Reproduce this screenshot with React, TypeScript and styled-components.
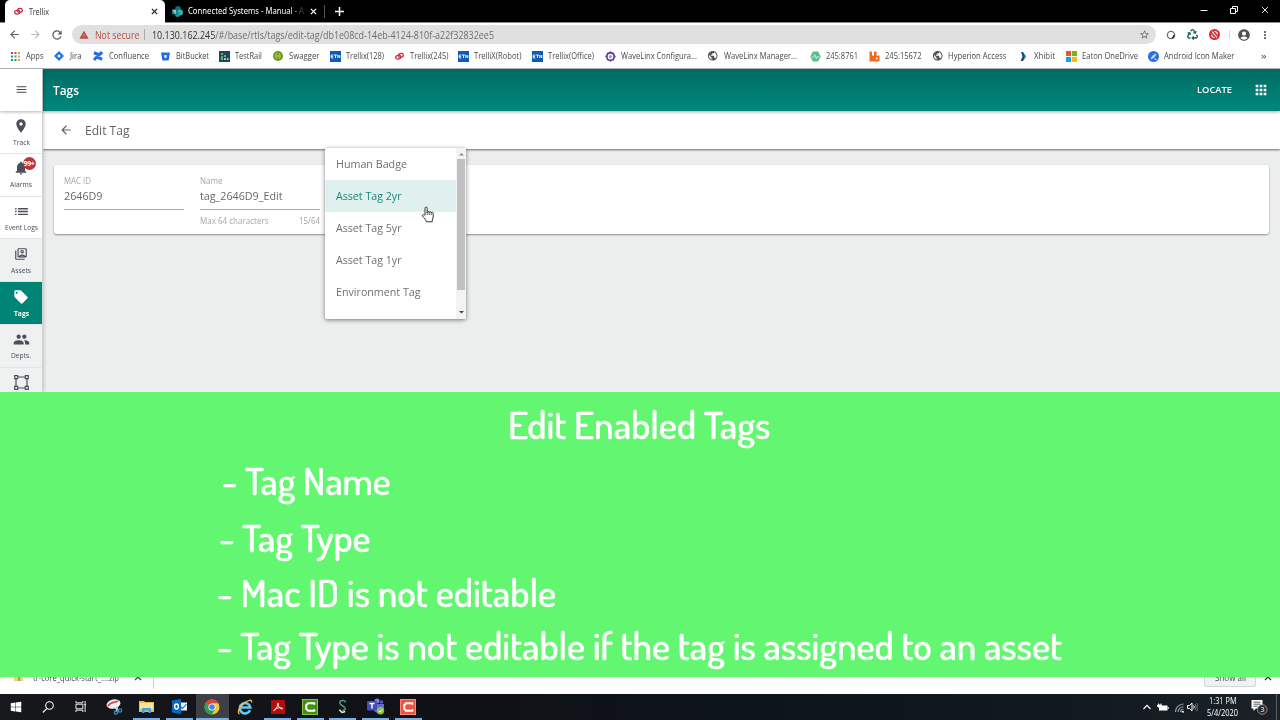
import React, { useLayoutEffect, useRef, useState } from "react";
import styled, { createGlobalStyle, css } from "styled-components";
import {
  MdMenu, MdPlace, MdNotifications, MdList, MdLocalOffer, MdPeople, MdArrowBack, MdArrowForward,
  MdApps, MdRefresh, MdWarning, MdStarBorder, MdAccountCircle, MdMoreVert, MdOutlineSwitchAccount, MdPublic,
} from "react-icons/md";
import { FaRecycle, FaConfluence, FaBitbucket, FaWindows } from "react-icons/fa";

const Global = createGlobalStyle`
  html, body { margin: 0; padding: 0; overflow: hidden; }
  * { box-sizing: border-box; }
  body { font-family: "Open Sans", "Noto Sans", sans-serif; }
  svg { display: block; flex: none; }
`;

/* ---------- text scaled to a known measure ---------- */
const Measure = styled.span<{ $w: number }>`
  display: block;
  flex: none;
  width: ${(p) => p.$w}px;
  white-space: nowrap;
`;
const MeasureInner = styled.span`
  display: inline-block;
  transform-origin: 0 50%;
`;
function Fit({ w, children }: { w: number; children: React.ReactNode }) {
  const ref = useRef<HTMLSpanElement>(null);
  const [scale, setScale] = useState(1);
  useLayoutEffect(() => {
    if (ref.current) setScale(w / ref.current.getBoundingClientRect().width);
  }, [w]);
  return (
    <Measure $w={w}>
      <MeasureInner ref={ref} style={{ transform: `scaleX(${scale})` }}>{children}</MeasureInner>
    </Measure>
  );
}

const Screen = styled.div`
  width: 1280px;
  height: 720px;
  display: flex;
  flex-direction: column;
  overflow: hidden;
  background: #fff;
`;

/* ---------- browser chrome ---------- */
const TabStrip = styled.div`
  height: 23px;
  flex: none;
  display: flex;
  align-items: stretch;
  background: #000;
  border-bottom: 1px solid #8b8b8b;
  padding-left: 5px;
  color: #fff;
  font: 9.7px/22px "Noto Sans", sans-serif;
`;
const Tab = styled.div<{ $active?: boolean; $w: number }>`
  width: ${(p) => p.$w}px;
  display: flex;
  align-items: center;
  padding: 0 7px 0 ${(p) => (p.$active ? 9 : 7)}px;
  gap: ${(p) => (p.$active ? 6 : 5)}px;
  ${(p) => p.$active && css`
    height: 23px;
    background: #fff;
    color: #3c4043;
    border-radius: 5px 5px 0 0;
  `}
`;
const TabTitle = styled.div<{ $fade?: boolean }>`
  flex: 1;
  ${(p) => p.$fade && css`mask-image: linear-gradient(90deg, #000 88%, rgba(0, 0, 0, 0.25) 97%);`}
`;
const TabDivider = styled.div`
  width: 1px;
  height: 13px;
  margin: 5px 10px 0 0;
  background: #555;
`;
const WindowButtons = styled.div`
  margin-left: auto;
  display: flex;
  gap: 22.5px;
  align-items: center;
  padding-right: 11.5px;
  height: 19px;
`;

const Toolbar = styled.div`
  height: 23px;
  flex: none;
  display: flex;
  align-items: center;
  padding: 0 8px 0 8px;
  color: #5a5d61;
`;
const NavButtons = styled.div`
  display: flex;
  gap: 8px;
  width: 64px;
`;
const AddressBar = styled.div`
  height: 19px;
  width: 1084px;
  border-radius: 10px;
  background: #e0e0e0;
  display: flex;
  align-items: center;
  padding: 0 6px 0 7px;
  font: 10.4px/18px "Open Sans", sans-serif;
  color: #6b6e72;
  b { font-weight: 400; color: #303236; }
`;
const Insecure = styled.div`
  display: flex;
  align-items: center;
  gap: 6px;
  color: #bd4a42;
  padding-right: 5px;
  margin-right: 7px;
  background: linear-gradient(#aaa, #aaa) right center / 1px 11px no-repeat;
`;
const Push = styled.div`margin-left: auto;`;
const Extensions = styled.div`
  flex: 1;
  display: flex;
  align-items: center;
  gap: 11px;
  padding-left: 10px;
  color: #50555a;
`;
const ExtDivider = styled.div`width: 1px; height: 9px; margin: 0 -4px 0 -2px; background: #d5d8dc;`;
const Kebab = styled.div`margin-left: -3px;`;

const Bookmarks = styled.div`
  height: 23px;
  flex: none;
  display: flex;
  align-items: center;
  padding: 0 0 2px 10px;
  border-bottom: 1px solid #a9b1b0;
  color: #46494d;
  font: 9.2px/18px "Open Sans", sans-serif;
`;
const Bookmark = styled.div<{ $slot: number }>`
  width: ${(p) => p.$slot}px;
  flex: none;
  display: flex;
  align-items: center;
  gap: 5px;
`;
const BookmarkIcon = styled.div`
  width: 11px;
  height: 11px;
  display: flex;
  align-items: center;
  justify-content: center;
`;

const TrellixLogo = ({ s = 10 }: { s?: number }) => (
  <svg width={s} height={s} viewBox="0 0 20 20" fill="none" strokeWidth="2.900">
    <rect x="1.500" y="7.500" width="11" height="8" rx="4" stroke="#b8304e" transform="rotate(-12 7 11.500)" />
    <rect x="7.500" y="3.500" width="11" height="8" rx="4" stroke="#e0283c" transform="rotate(-12 13 7.500)" />
  </svg>
);
const EatonLogo = () => (
  <svg width="11" height="11" viewBox="0 0 22 22">
    <rect width="22" height="22" fill="#0a5cb5" />
    <path d="M7 8H2.500v6H7M2.500 11H6M8 8h6M11 8v6M15.500 14V8l4 6V8" stroke="#fff" strokeWidth="1.700" fill="none" />
  </svg>
);
const bookmarkIcons: Record<string, React.ReactNode> = {
  apps: (
    <svg width="9" height="9" viewBox="0 0 9 9">
      {["#db4437", "#db4437", "#e8a33d", "#0f9d58", "#4285f4", "#e8a33d", "#0f9d58", "#0f9d58", "#e8a33d"].map((c, i) => (
        <rect key={i} x={(i % 3) * 3.5} y={Math.floor(i / 3) * 3.5} width="2" height="2" fill={c} />
      ))}
    </svg>
  ),
  jira: (
    <svg width="10" height="10" viewBox="0 0 20 20">
      <path d="M10 0l10 10-10 10L0 10z" fill="#2273e6" /><path d="M10 6.500l3.500 3.500-3.500 3.500L6.500 10z" fill="#fff" />
    </svg>
  ),
  confluence: <FaConfluence size={10} color="#1f6fe0" />,
  bitbucket: <FaBitbucket size={9} color="#1f6fe0" />,
  testrail: (
    <svg width="11" height="11" viewBox="0 0 11 11">
      <rect width="11" height="11" fill="#24455f" />
      <path d="M2 2h2v2H2zM2 5h2v4H2zM5 4h2v2H5z" fill="#61b26b" /><path d="M5 7h2v2H5zM8 7h1.500v2H8z" fill="#9fd0a0" />
    </svg>
  ),
  swagger: (
    <svg width="10" height="10" viewBox="0 0 22 22">
      <circle cx="11" cy="11" r="11" fill="#6f9a16" />
      <path d="M9 5.500C6 5.500 8 10 5.500 11c2.500 1 .5 5.500 3.500 5.500M13 5.500c3 0 1 4.500 3.500 5.500-2.500 1-.5 5.500-3.500 5.500M9 11h4.500" stroke="#d9eda0" strokeWidth="1.800" fill="none" />
    </svg>
  ),
  eaton: <EatonLogo />,
  trellix: <TrellixLogo s={9} />,
  wave: (
    <svg width="11" height="11" viewBox="0 0 22 22">
      <path d="M11 .5l3 2 4 .8 1 3.700 2.500 4-2.500 4-1 3.700-4 .8-3 2-3-2-4-.8-1-3.700L.5 11 3 7l1-3.700 4-.8z" fill="#5937a8" />
      <circle cx="11" cy="11" r="4.500" fill="#a58bdc" stroke="#fff" strokeWidth="2.500" />
    </svg>
  ),
  globe: <MdPublic size={11.5} color="#505357" />,
  pulse: (
    <svg width="11" height="11" viewBox="0 0 22 22">
      <path d="M6 1h10l5.500 10L16 21H6L.5 11z" fill="#57bb8a" />
      <path d="M3 12h4l2.500-5 3 9 2.500-6 1.500 2H19" stroke="#e5f7ee" strokeWidth="1.600" fill="none" />
    </svg>
  ),
  rabbit: (
    <svg width="11" height="11" viewBox="0 0 22 22">
      <path d="M1 1h5v8h4V1h5v8h6v12H1z" fill="#f3691d" /><rect x="14" y="13" width="3" height="3.500" fill="#fff" />
    </svg>
  ),
  xhibit: (
    <svg width="11" height="11" viewBox="0 0 22 22">
      <path d="M6 2h4l6 9-6 9H5l4-9z" fill="#1b4b77" /><path d="M12 5l4 6-5 7 2-7z" fill="#3192cf" />
    </svg>
  ),
  microsoft: (
    <svg width="11" height="11" viewBox="0 0 11 11">
      <path d="M0 0h5v5H0z" fill="#ef5327" /><path d="M6 0h5v5H6z" fill="#7cb613" />
      <path d="M0 6h5v5H0z" fill="#12a1e8" /><path d="M6 6h5v5H6z" fill="#fdb813" />
    </svg>
  ),
  maker: (
    <svg width="11" height="11" viewBox="0 0 22 22">
      <circle cx="11" cy="11" r="11" fill="#2a6fdb" /><path d="M5 17l3-7 7-5 2 2-5 7z" fill="#b9d4ff" /><path d="M13 16l4 1" stroke="#fff" strokeWidth="2" />
    </svg>
  ),
};
/* icon, label, label width, slot width */
const bookmarks: [string, string, number, number][] = [
  ["apps", "Apps", 17.5, 43.5], ["jira", "Jira", 11.5, 39], ["confluence", "Confluence", 40, 67],
  ["bitbucket", "BitBucket", 33, 59.5], ["testrail", "TestRail", 27, 53.5], ["swagger", "Swagger", 30.5, 57],
  ["eaton", "Trellix(128)", 38, 64.5], ["trellix", "Trellix(245)", 38.5, 63.5], ["eaton", "TrelliX(Robot)", 47.5, 74],
  ["eaton", "Trellix(Office)", 46, 73], ["wave", "WaveLinx Configura...", 76, 103], ["globe", "WaveLinx Manager...", 73, 102.5],
  ["pulse", "245:8761", 32, 59], ["rabbit", "245:15672", 36.5, 63], ["globe", "Hyperion Access", 58.5, 85.5],
  ["xhibit", "Xhibit", 21, 48], ["microsoft", "Eaton OneDrive", 56, 82], ["maker", "Android Icon Maker", 70.5, 113.5],
];

/* ---------- application ---------- */
const Application = styled.div`
  height: 323px;
  flex: none;
  display: flex;
  overflow: hidden;
  background: #eceeed;
`;
const Sidebar = styled.nav`
  width: 43px;
  flex: none;
  background: #eff1f1;
  border-right: 1px solid #cfd3d3;
  box-shadow: 1px 0 3px rgba(0, 0, 0, 0.18);
  z-index: 2;
`;
const MenuButton = styled.div`
  height: 42px;
  display: flex;
  align-items: center;
  justify-content: center;
  padding-bottom: 1px;
  background: #fff;
  color: #45484c;
  box-shadow: 0 1px 3px rgba(0, 0, 0, 0.3);
  position: relative;
`;
const SideItem = styled.div<{ $tone?: "white" | "active" }>`
  height: 42.8px;
  display: flex;
  flex-direction: column;
  align-items: center;
  padding-top: 7px;
  gap: 3.5px;
  border-bottom: 1px solid #e2e4e5;
  background: ${(p) => (p.$tone === "white" ? "#fff" : p.$tone === "active" ? "#008476" : "transparent")};
  color: ${(p) => (p.$tone === "active" ? "#fff" : "#4b4f5b")};
  font: ${(p) => (p.$tone === "active" ? 700 : 400)} 6.3px/11px "Open Sans", sans-serif;
`;
const IconSlot = styled.div`
  height: 15px;
  display: flex;
  align-items: center;
  position: relative;
`;
const CountBadge = styled.span`
  position: absolute;
  left: 9.5px;
  top: -4px;
  width: 13px;
  height: 13px;
  border-radius: 7px;
  background: #c6303b;
  color: #fff;
  font: 700 7px/13px "Open Sans", sans-serif;
  letter-spacing: -0.3px;
  text-align: center;
`;
const Main = styled.main`flex: 1; min-width: 0;`;
const AppBar = styled.header`
  height: 42px;
  display: flex;
  align-items: center;
  padding: 0 11px 0 10px;
  background: linear-gradient(#006b62, #00857a 85%);
  color: #fff;
  box-shadow: 0 1px 3px rgba(0, 0, 0, 0.35);
  position: relative;
  z-index: 1;
`;
const AppTitle = styled.div`font-size: 12px; font-weight: 600;`;
const Locate = styled.div`
  margin-left: auto;
  margin-right: 21px;
  font-size: 9.7px;
  font-weight: 600;
  line-height: 14px;
`;
const SubHeader = styled.div`
  height: 38px;
  display: flex;
  align-items: center;
  gap: 12px;
  padding-left: 16px;
  background: #fff;
  color: #606467;
  font-size: 12.4px;
  box-shadow: 0 1px 2px rgba(0, 0, 0, 0.55);
`;
const Card = styled.section`
  height: 69px;
  margin: 16px 11px 0 11px;
  padding: 10px 10px 0;
  background: #fff;
  border-radius: 3px;
  box-shadow: 0 1px 2px rgba(0, 0, 0, 0.4);
  display: flex;
  gap: 16px;
`;
const Field = styled.div`
  width: 120px;
  display: flex;
  flex-direction: column;
`;
const FieldLabel = styled.div`font-size: 8.3px; line-height: 12px; color: #a3a6a8;`;
const FieldValue = styled.div`
  height: 23px;
  font-size: 11.4px;
  line-height: 18px;
  color: #65686b;
  border-bottom: 1px solid #a7aaac;
`;
const FieldHint = styled.div`
  display: flex;
  justify-content: space-between;
  font-size: 8.3px;
  line-height: 22px;
  color: #a3a6a8;
`;

/* Floating option list over the form */
const Menu = styled.div`
  position: absolute;
  left: 325px;
  top: 148px;
  width: 141px;
  height: 171px;
  z-index: 5;
  display: flex;
  background: #fff;
  border-radius: 2px;
  box-shadow: 0 1px 4px rgba(0, 0, 0, 0.5);
  overflow: hidden;
`;
const Options = styled.div`flex: 1;`;
const Option = styled.div<{ $selected?: boolean }>`
  height: 32px;
  padding-left: 11px;
  font-size: 11.4px;
  line-height: 32px;
  color: ${(p) => (p.$selected ? "#16887b" : "#6d7073")};
  background: ${(p) => (p.$selected ? "#dff0ee" : "transparent")};
`;
const ScrollTrack = styled.div`
  width: 10px;
  padding: 3px 0 4px;
  background: #f3f3f3;
  display: flex;
  flex-direction: column;
  align-items: center;
`;
const ScrollThumb = styled.div`width: 8px; height: 131px; margin: 2px 0 auto; background: #c0c0c0;`;
const Pointer = styled.div`position: absolute; left: 421px; top: 206px; z-index: 6;`;

/* ---------- caption ---------- */
const Caption = styled.section`
  height: 285px;
  flex: none;
  background: #63f671;
  color: #fff;
  font: 500 37.8px/56px Dosis, Lato, sans-serif;
  padding-top: 4px;
`;
const CaptionLine = styled.div<{ $x: number; $h: number }>`
  height: ${(p) => p.$h}px;
  padding-left: ${(p) => p.$x}px;
  -webkit-text-stroke: 0.5px #fff;
`;

/* ---------- downloads + taskbar ---------- */
const Downloads = styled.div`
  height: 17px;
  flex: none;
  display: flex;
  align-items: flex-start;
  overflow: hidden;
  background: #fff;
  font: 9.5px/14px "Open Sans", sans-serif;
  color: #44474b;
`;
const DownloadItem = styled.div`
  width: 154px;
  height: 12px;
  border-right: 1px solid #d0d0d0;
  padding-left: 14px;
  display: flex;
  gap: 10px;
`;
const Raised = styled.div`margin: -6px 5px 0 0;`;
const ShowAll = styled.div`
  margin-left: auto;
  width: 52px;
  height: 10px;
  border: 1px solid #d5d5d5;
  border-top: 0;
  border-radius: 0 0 3px 3px;
  background: #f1f1f1;
  padding-left: 10px;
`;
const CloseBar = styled.div`width: 8px; margin: 0 8px 0 8px;`;

const Taskbar = styled.div`
  height: 26px;
  flex: none;
  display: flex;
  background: linear-gradient(90deg, #17181c 0, #101116 35%, #0d141b 60%, #111a20 85%, #1c2227);
  color: #fff;
`;
const TaskButton = styled.div<{ $w?: number; $open?: boolean; $active?: boolean }>`
  width: ${(p) => p.$w ?? 32.67}px;
  flex: none;
  display: flex;
  align-items: center;
  justify-content: center;
  padding-bottom: 1px;
  ${(p) => p.$open && css`background: linear-gradient(#76aee6, #76aee6) center bottom / ${p.$active ? "100%" : "27px"} 2px no-repeat;`}
  ${(p) => p.$active && css`background-color: #3e4045;`}
`;
const Tray = styled.div`
  margin-left: auto;
  display: flex;
  align-items: center;
  padding-right: 3px;
`;
const Clock = styled.div`
  margin: 0 13px 0 9px;
  display: flex;
  flex-direction: column;
  align-items: center;
  font: 9px/12px "Open Sans", sans-serif;
`;
const DesktopEdge = styled.div`width: 1px; height: 26px; margin-left: 8px; background: #5a5f63;`;

const Cross = ({ s = 7, c = "#fff", w = 1.3 }) => (
  <svg width={s} height={s} viewBox="0 0 8 8" stroke={c} strokeWidth={w}><path d="M1 1l6 6M7 1L1 7" /></svg>
);
const Camtasia = ({ bg, rim }: { bg: string; rim: string }) => (
  <svg width="16" height="16" viewBox="0 0 17 17">
    <rect width="17" height="17" fill={bg} /><rect x=".5" y=".5" width="16" height="16" fill="none" stroke={rim} />
    <path d="M13 6V4.500H6.500L4.500 6.500v4l2 2H13V11" fill="none" stroke="#fff" strokeWidth="2.200" />
  </svg>
);

export default function App() {
  return (
    <Screen>
      <Global />
      <TabStrip>
        <Tab $active $w={160}>
          <TrellixLogo s={9} />
          <TabTitle><Fit w={20}>Trellix</Fit></TabTitle>
          <Cross c="#222" w={1.5} />
        </Tab>
        <Tab $w={159}>
          <svg width="11" height="11" viewBox="0 0 22 22">
            <circle cx="12" cy="6" r="6" fill="#0f6c6f" /><circle cx="16" cy="13" r="6" fill="#37b0b5" />
            <circle cx="11" cy="17" r="5" fill="#1a9ba1" /><rect y="6" width="11" height="11" rx="1" fill="#03787c" />
            <path d="M7.500 9h-4v2.500h4V14h-4" stroke="#fff" strokeWidth="1.400" fill="none" />
          </svg>
          <TabTitle $fade><Fit w={116}>Connected Systems - Manual - A</Fit></TabTitle>
          <Cross w={1.5} />
        </Tab>
        <TabDivider />
        <svg width="9" height="22" viewBox="0 0 9 22" stroke="#fff" strokeWidth="1.500"><path d="M0 11.500h9M4.500 7v9" /></svg>
        <WindowButtons>
          <svg width="8" height="8" viewBox="0 0 8 8" stroke="#fff"><path d="M0.500 4.500h7" /></svg>
          <svg width="8" height="8" viewBox="0 0 8 8" stroke="#fff" fill="none"><path d="M.5 2.500h5v5h-5zM2.500 2V.5h5v5H6" /></svg>
          <Cross s={8} w={0.9} />
        </WindowButtons>
      </TabStrip>

      <Toolbar>
        <NavButtons>
          <MdArrowBack size={13} />
          <MdArrowForward size={13} color="#b9bcbf" />
          <MdRefresh size={14} />
        </NavButtons>
        <AddressBar>
          <Insecure><MdWarning size={10} /><Fit w={44.5}>Not secure</Fit></Insecure>
          <Fit w={342}><b>10.130.162.245</b>/#/base/rtls/tags/edit-tag/db1e08cd-14eb-4124-810f-a22f32832ee5</Fit>
          <Push><MdStarBorder size={11} /></Push>
        </AddressBar>
        <Extensions>
          <svg width="10" height="10" viewBox="0 0 10 10"><circle cx="5" cy="5" r="3.600" fill="none" stroke="#6b6f73" strokeWidth="1.300" /><path d="M6 8a3 3 0 0 0 2-3" stroke="#333" strokeWidth="1.600" fill="none" /></svg>
          <FaRecycle size={11} color="#18605a" />
          <svg width="11" height="11" viewBox="0 0 22 22" fill="none">
            <circle cx="11" cy="11" r="11" fill="#dc2b35" />
            <path d="M6 5l10 12M11 5a5 5 0 0 1 5.500 6M11 17a5 5 0 0 1-5.500-6" stroke="#fff" strokeWidth="2.200" />
          </svg>
          <ExtDivider />
          <MdAccountCircle size={14} />
          <Kebab><MdMoreVert size={12} /></Kebab>
        </Extensions>
      </Toolbar>

      <Bookmarks>
        {bookmarks.map(([icon, label, w, slot]) => (
          <Bookmark key={label} $slot={slot}>
            <BookmarkIcon>{bookmarkIcons[icon]}</BookmarkIcon>
            <Fit w={w}>{label}</Fit>
          </Bookmark>
        ))}
        <Fit w={5.5}>»</Fit>
      </Bookmarks>

      <Application>
        <Sidebar>
          <MenuButton><MdMenu size={13} /></MenuButton>
          <SideItem $tone="white"><IconSlot><MdPlace size={16} /></IconSlot><Fit w={17}>Track</Fit></SideItem>
          <SideItem $tone="white">
            <IconSlot><MdNotifications size={16} /><CountBadge>99+</CountBadge></IconSlot><Fit w={22}>Alarms</Fit>
          </SideItem>
          <SideItem $tone="white"><IconSlot><MdList size={17} /></IconSlot><Fit w={33}>Event Logs</Fit></SideItem>
          <SideItem><IconSlot><MdOutlineSwitchAccount size={14} /></IconSlot><Fit w={20}>Assets</Fit></SideItem>
          <SideItem $tone="active"><IconSlot><MdLocalOffer size={16} /></IconSlot><Fit w={15}>Tags</Fit></SideItem>
          <SideItem><IconSlot><MdPeople size={17} /></IconSlot><Fit w={20}>Depts.</Fit></SideItem>
          <SideItem>
            <IconSlot>
              <svg width="15" height="15" viewBox="0 0 15 15" fill="none" stroke="currentColor" strokeWidth="1.200">
                <path d="M4 2h7M4 13h7M2 4v7M13 4v7" />
                <path d="M.7 .7h3v3h-3zM11.300 .7h3v3h-3zM.7 11.300h3v3h-3zM11.300 11.300h3v3h-3z" />
              </svg>
            </IconSlot>
          </SideItem>
        </Sidebar>
        <Main>
          <AppBar>
            <AppTitle><Fit w={26}>Tags</Fit></AppTitle>
            <Locate><Fit w={35}>LOCATE</Fit></Locate>
            <MdApps size={16} />
          </AppBar>
          <SubHeader><MdArrowBack size={14} /><Fit w={44.5}>Edit Tag</Fit></SubHeader>
          <Card>
            <Field>
              <FieldLabel><Fit w={27}>MAC ID</Fit></FieldLabel>
              <FieldValue><Fit w={38.5}>2646D9</Fit></FieldValue>
            </Field>
            <Field>
              <FieldLabel><Fit w={22.5}>Name</Fit></FieldLabel>
              <FieldValue><Fit w={82.5}>tag_2646D9_Edit</Fit></FieldValue>
              <FieldHint><Fit w={68.5}>Max 64 characters</Fit><Fit w={21}>15/64</Fit></FieldHint>
            </Field>
          </Card>
        </Main>
      </Application>
      <Menu>
        <Options>
          <Option><Fit w={71}>Human Badge</Fit></Option>
          <Option $selected><Fit w={65.5}>Asset Tag 2yr</Fit></Option>
          <Option><Fit w={65.5}>Asset Tag 5yr</Fit></Option>
          <Option><Fit w={65.5}>Asset Tag 1yr</Fit></Option>
          <Option><Fit w={84.5}>Environment Tag</Fit></Option>
        </Options>
        <ScrollTrack>
          <svg width="5" height="6" viewBox="0 0 5 6"><path d="M0 4.500L2.500 2 5 4.500z" fill="#8a8a8a" /></svg>
          <ScrollThumb />
          <svg width="5" height="5" viewBox="0 0 5 5"><path d="M0 1l2.500 2.500L5 1z" fill="#444" /></svg>
        </ScrollTrack>
      </Menu>
      <Pointer>
        <svg width="14" height="17" viewBox="0 0 14 17">
          <path d="M4 9V2.200a1.100 1.100 0 0 1 2.200 0V6.500a1 1 0 0 1 2 0 1 1 0 0 1 2 .5 1 1 0 0 1 2 .6V11c0 1.500-1 2.300-1 4.800H5.500C5 13.500 2.800 12 1.500 10c-.5-1 .8-1.800 1.700-.9z" fill="#fff" stroke="#333" strokeWidth="1" />
          <path d="M6.200 6v3M8.200 6.500v2.500M10.200 7v2" stroke="#333" strokeWidth=".8" />
        </svg>
      </Pointer>

      <Caption>
        <CaptionLine $x={508} $h={56}><Fit w={262.5}>Edit Enabled Tags</Fit></CaptionLine>
        <CaptionLine $x={222} $h={57}><Fit w={168.5}>- Tag Name</Fit></CaptionLine>
        <CaptionLine $x={219} $h={55}><Fit w={151.5}>- Tag Type</Fit></CaptionLine>
        <CaptionLine $x={217} $h={53}><Fit w={339}>- Mac ID is not editable</Fit></CaptionLine>
        <CaptionLine $x={217} $h={56}><Fit w={845}>- Tag Type is not editable if the tag is assigned to an asset</Fit></CaptionLine>
      </Caption>

      <Downloads>
        <DownloadItem>
          <svg width="9" height="4" viewBox="0 0 9 4"><path d="M0 0h9v4H0z" fill="#f2cf74" /><path d="M4 0h2v4H4z" fill="#a79b75" /></svg>
          <Raised><Fit w={86}>tr-core_quick-start_....zip</Fit></Raised>
          <svg width="8" height="4" viewBox="0 0 8 4" fill="none" stroke="#444" strokeWidth="1.300"><path d="M1 3l3-3 3 3" /></svg>
        </DownloadItem>
        <ShowAll><Raised><Fit w={31}>Show all</Fit></Raised></ShowAll>
        <CloseBar><svg width="8" height="4" viewBox="0 0 8 4" fill="none" stroke="#333" strokeWidth="1.300"><path d="M1 3l3-3 3 3" /></svg></CloseBar>
      </Downloads>

      <Taskbar>
        <TaskButton $w={32}><FaWindows size={12} /></TaskButton>
        <TaskButton $w={32}>
          <svg width="12" height="12" viewBox="0 0 12 12" fill="none" stroke="#fff" strokeWidth="1.100"><circle cx="7.500" cy="4.500" r="3.800" /><path d="M5 7.300L.8 11.500" /></svg>
        </TaskButton>
        <TaskButton $w={34}>
          <svg width="12" height="11" viewBox="0 0 12 12" fill="none" stroke="#fff" strokeWidth="1"><path d="M.5 0v2h7.500V0M.5 12v-2h7.500v2M.5 3.500h7.500v5H.5zM10.500 0v12M9.500 4h2" /></svg>
        </TaskButton>
        <TaskButton>
          <svg width="17" height="16" viewBox="0 0 17 16">
            <ellipse cx="7.500" cy="5" rx="7" ry="4.500" transform="rotate(-12 7.500 5)" fill="#f0f0f2" />
            <path d="M2 7c3-5 7-3 10-5" stroke="#d64b55" strokeWidth="1.800" fill="none" />
            <path d="M8 8l5 4M12 7l-2 6" stroke="#d8dde3" strokeWidth="1.200" />
            <circle cx="10" cy="13.500" r="1.700" fill="none" stroke="#338bd0" strokeWidth="1.300" /><circle cx="14" cy="11.500" r="1.700" fill="none" stroke="#338bd0" strokeWidth="1.300" />
          </svg>
        </TaskButton>
        <TaskButton $open>
          <svg width="15" height="13" viewBox="0 0 15 13"><path d="M0 1h5l1 1h9v10H0z" fill="#e8bd4e" /><path d="M1 3h13v6H1z" fill="#fbe398" /><path d="M3 13V8h9v5H9.500v-2.500h-4V13z" fill="#4aa3d8" /></svg>
        </TaskButton>
        <TaskButton $open>
          <svg width="15" height="15" viewBox="0 0 15 15">
            <path d="M7 3.500h8v8H7z" fill="#e8f3fc" /><path d="M8.500 7.500l2 2 4-4.500" stroke="#0f6fc5" strokeWidth="1.100" fill="none" />
            <path d="M0 1.500L9 0v15L0 13.500z" fill="#0769bf" /><ellipse cx="4.500" cy="7.500" rx="1.900" ry="2.500" stroke="#fff" strokeWidth="1.400" fill="none" />
          </svg>
        </TaskButton>
        <TaskButton $open $active>
          <svg width="16" height="16" viewBox="0 0 16 16">
            <circle cx="8" cy="8" r="7.500" fill="#f8c62c" />
            <path d="M8 8L1.500 4.250A7.500 7.500 0 0 0 8 15.500L11.250 9.900z" fill="#2c9f54" />
            <path d="M8 8L1.500 4.250A7.500 7.500 0 0 1 14.500 4.250H8z" fill="#dd4437" />
            <circle cx="8" cy="8" r="3.600" fill="#fff" /><circle cx="8" cy="8" r="2.800" fill="#4583ea" />
          </svg>
        </TaskButton>
        <TaskButton>
          <svg width="16" height="16" viewBox="0 0 16 16" fill="none">
            <path d="M13 11.200A5.200 5.200 0 1 1 13.300 8.500H4" stroke="#66c6f4" strokeWidth="2.600" />
            <path d="M2.500 14.800C0 14 2 8 7 4.200 11 1 15.500 0 14.500 3.500" stroke="#f2bd38" strokeWidth="1.400" />
          </svg>
        </TaskButton>
        <TaskButton $open>
          <svg width="14" height="14" viewBox="0 0 15 15"><rect width="15" height="15" rx="1" fill="#b40b0b" /><path d="M3 11.500c2-1 4-4 4.200-7.500 0-1.500 1-1 .8.500C7.500 7 10 10 12 9.500c1.500-.5-.5-1.500-3-1.200S4 9.500 3 11.500z" stroke="#fff" fill="none" strokeWidth=".9" /></svg>
        </TaskButton>
        <TaskButton $open><Camtasia bg="#438f16" rim="#8cc43d" /></TaskButton>
        <TaskButton $open>
          <svg width="11" height="15" viewBox="0 0 12 16" fill="none" strokeWidth="1.600"><path d="M9.500 3.500C8 .5 3 1 3 4c0 3 6 3 6 6.200C9 12 7 12.500 6 12" stroke="#4f9c73" /><path d="M4 6.500c2 .2 4 1.500 3.500 3" stroke="#4f9c73" strokeWidth="1" /><path d="M2.500 11.500l3 3 3.500-1" stroke="#e8f0ec" /></svg>
        </TaskButton>
        <TaskButton $open>
          <svg width="18" height="17" viewBox="0 0 18 17">
            <circle cx="10" cy="3" r="2.500" fill="#7b83eb" /><circle cx="14.500" cy="4" r="1.800" fill="#5059c9" />
            <path d="M7 6h10v4.500c0 2-1.500 3-3 3-1 2-6 2-7-1z" fill="#6169d4" /><rect y="3" width="10" height="9.500" rx="1" fill="#464eb8" />
            <path d="M2.500 5.500h5M5 5.500v5" stroke="#fff" strokeWidth="1.400" /><circle cx="13.500" cy="12.800" r="3.700" fill="#8bc34a" /><path d="M11.800 12.800l1.300 1.300 2.300-2.500" stroke="#fff" fill="none" />
          </svg>
        </TaskButton>
        <TaskButton $open><Camtasia bg="#ee5443" rim="#ff8877" /></TaskButton>
        <Tray>
          <svg width="8" height="6" viewBox="0 0 8 6" fill="none" stroke="#fff" strokeWidth="1.100"><path d="M.5 5L4 1.300 7.500 5" /></svg>
          <svg width="19" height="10" viewBox="0 0 19 10"><path d="M8.500 3.500H16.500v5H8.500" fill="#fff" /><path d="M17.200 5v2" stroke="#fff" /><path d="M8.500 8.500V5.500M6.500 3.500h4.500M7.500 1.500v2M10 1.500v2M6.500 3v1.500q2 2 4 0V3z" stroke="#fff" fill="#fff" strokeWidth=".9" /></svg>
          <svg width="17" height="11" viewBox="0 0 17 11" fill="none" stroke="#9da2a5" strokeWidth="1.100"><path d="M5.500 10A8 8 0 0 1 13.500 2M8 10A5.500 5.500 0 0 1 13.500 4.800M10.500 10a3 3 0 0 1 3-2.700" /><path d="M11.800 9.800h2" stroke="#fff" strokeWidth="1.600" /></svg>
          <svg width="11" height="10" viewBox="0 0 11 10" fill="none" stroke="#fff"><path d="M.5 3.500h2l2.500-2.500v8L2.500 6.500h-2z" /><path d="M6.500 3.500a2 2 0 0 1 0 3" /><path d="M8 2a4.500 4.500 0 0 1 0 6M9.500 .8a6 6 0 0 1 0 8.400" stroke="#92979a" strokeWidth=".8" /></svg>
          <Clock><Fit w={27.5}>1:31 PM</Fit><Fit w={31}>5/4/2020</Fit></Clock>
          <svg width="17" height="16" viewBox="0 0 17 16">
            <path d="M.5 1h11v8.500H5L2.500 12V9.500h-2z" fill="#fff" /><path d="M2.500 3.200h7M2.500 5.200h7M2.500 7.200h4" stroke="#333" strokeWidth=".8" />
            <circle cx="11.300" cy="10.500" r="4.800" fill="#23282c" stroke="#a9adb0" strokeWidth=".8" />
            <text x="11.300" y="13.300" fill="#fff" fontSize="7.500" textAnchor="middle" fontFamily="Open Sans">3</text>
          </svg>
          <DesktopEdge />
        </Tray>
      </Taskbar>
    </Screen>
  );
}
